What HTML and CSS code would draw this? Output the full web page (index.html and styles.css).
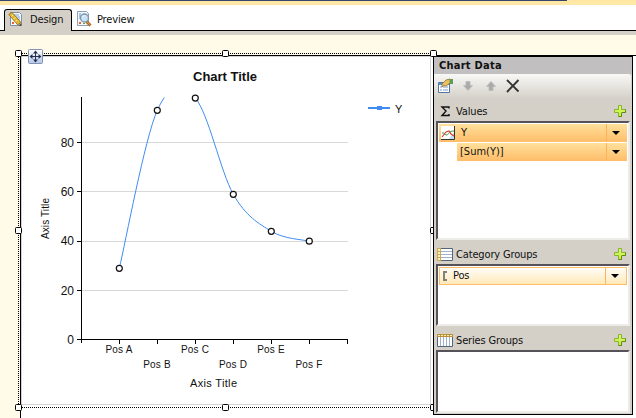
FILE: index.html
```html
<!DOCTYPE html>
<html lang="en">
<head>
  <meta charset="UTF-8">
  <title>Report Designer</title>
  <link rel="stylesheet" href="styles.css">
</head>
<body>
  <svg class="defs" width="0" height="0">
    <linearGradient id="plus-fill" x2="0" y2="1">
      <stop offset="0" stop-color="#e0f77c"/><stop offset="1" stop-color="#c4f02c"/>
    </linearGradient>
    <linearGradient id="move-fill" x2="0" y2="1">
      <stop offset="0" stop-color="#fff"/><stop offset="1" stop-color="#b4c4e6"/>
    </linearGradient>
    <symbol id="plus" viewBox="0 0 12 12">
      <path d="M4.500.5h3v4h4v3h-4v4h-3v-4h-4v-3h4z" fill="url(#plus-fill)" stroke="#86b430"/>
      <path d="M7.500 8v3.500h-3M8 7.500h3.500v-3" fill="none" stroke="#5b8a1c"/>
    </symbol>
  </svg>

  <div class="top-bar"><div class="top-line"></div></div>

  <!-- Design / Preview tabs -->
  <div class="tabs">
    <div class="tab active">
      <svg width="16" height="16" viewBox="0 0 16 16">
        <path d="M2.500 1.500h9l2 2v11h-11z" fill="#f4f8fd" stroke="#7b91ab"/>
        <path d="M6 4h5M8 6h4M9 8h3" stroke="#7fa4d0"/>
        <path d="M4 11h2v2H4z" fill="#e8602c"/><path d="M10 10h2v3h-2z" fill="#58a848"/>
        <path d="M.8 3.500l3-2.300 9 10-3 2.800z" fill="#e8b930" stroke="#8a6414" stroke-width=".8"/>
        <path d="M3.500 5.500L5 4M5.500 8L7 6.500M7.500 10.500L9 9" stroke="#fff09a"/>
        <path d="M10.500 14.500l2.500-2.500.5 3z" fill="#5b4630"/>
      </svg>
      <span>Design</span>
    </div>
    <div class="tab">
      <svg width="16" height="16" viewBox="0 0 16 16">
        <path d="M1.500.5h9l2 2v12h-11z" fill="#f4f8fd" stroke="#8ba0b8"/>
        <path d="M3 3h2M3 5h2M3 7h1" stroke="#6590c4"/>
        <path d="M3 11h2v2H3z" fill="#e8602c"/><path d="M7 12h2v1H7z" fill="#58a848"/>
        <path d="M10.500 10.500l4 4" stroke="#a5642a" stroke-width="3"/>
        <path d="M10 10l4.500 4" stroke="#eda643"/>
        <circle cx="8.500" cy="7" r="4" fill="#c9e2f4" stroke="#7c95b0" stroke-width="1.300"/>
        <path d="M6.500 6.500a2.500 2.500 0 0 1 2-1.800" fill="none" stroke="#fff"/>
      </svg>
      <span>Preview</span>
    </div>
  </div>
  <div class="strip"></div>

  <div class="workspace">
    <div class="page">
      <div class="chart">
        <svg width="412" height="350" viewBox="21 56 412 350">
          <clipPath id="plot"><rect x="82" y="97.500" width="270" height="243"/></clipPath>
          <path class="frame" d="M21.500 404.500v-348h409v348z"/>
          <text class="title" x="193" y="81" textLength="64">Chart Title</text>

          <path class="grid" d="M82 142.500h266M82 191.500h266M82 241.500h266M82 290.500h266"/>
          <path class="axis" d="M81.500 97v246M77 339.500h271M77 142.500h4M77 191.500h4M77 241.500h4M77 290.500h4M119.500 340v4M157.500 340v4M195.500 340v4M233.500 340v4M271.500 340v4M309.500 340v4M347.500 340v4"/>
          <g class="scale">
            <text x="74" y="147">80</text>
            <text x="74" y="196">60</text>
            <text x="74" y="245">40</text>
            <text x="74" y="295">20</text>
            <text x="74" y="344">0</text>
          </g>
          <g class="category">
            <text x="119" y="353">Pos A</text>
            <text x="157" y="368">Pos B</text>
            <text x="195" y="353">Pos C</text>
            <text x="233" y="368">Pos D</text>
            <text x="271" y="353">Pos E</text>
            <text x="309" y="368">Pos F</text>
          </g>
          <text class="axis-title" x="190" y="387" textLength="47">Axis Title</text>
          <text class="axis-title small" transform="translate(49 239) rotate(-90)" textLength="41">Axis Title</text>

          <path class="series" clip-path="url(#plot)" d="M119.300 268.300C125.600 241.900 144.700 138.700 157.300 110.300C169.900 81.900 182.700 84.100 195.300 98.100C208 112.100 220.700 172.100 233.300 194.300C245.900 216.500 258.700 223.500 271.300 231.300C283.900 239.100 303 239.500 309.300 241.200"/>
          <g class="markers">
            <circle cx="119.300" cy="268.300" r="3"/>
            <circle cx="157.300" cy="110.300" r="3"/>
            <circle cx="195.300" cy="98.100" r="3"/>
            <circle cx="233.300" cy="194.300" r="3"/>
            <circle cx="271.300" cy="231.300" r="3"/>
            <circle cx="309.300" cy="241.200" r="3"/>
          </g>

          <path class="legend-line" d="M368 108h22"/>
          <rect x="377" y="106" width="5" height="4" fill="#418cf0"/>
          <text class="legend" x="395" y="113">Y</text>
        </svg>
      </div>

      <div class="panel">
        <div class="panel-title">Chart Data</div>
        <div class="toolbar">
          <svg width="17" height="16" viewBox="0 0 17 16">
            <path d="M1.500 4.500h11v10h-11z" fill="#fff" stroke="#53769e"/>
            <path d="M2 6h10" stroke="#5e8fd0" stroke-width="2"/>
            <path d="M3 9h2M3 12h2M6 9h5M6 12h5" stroke="#7b9cc4"/>
            <path d="M5 6l4-4 4-1v4L9 8l-2-.5L5 9z" fill="#eac160" stroke="#94702c" stroke-width=".8"/>
            <path d="M13 1h3v5h-3z" fill="#55a05a"/>
          </svg>
          <svg width="10" height="10" viewBox="0 0 10 10">
            <path d="M3 .5h4v4h2.500L5 9.500.5 4.500H3z" fill="#aaa" stroke="#bcbcbc"/>
          </svg>
          <svg class="up" width="10" height="10" viewBox="0 0 10 10">
            <path d="M3 9.500h4v-4h2.500L5 .5.5 5.500H3z" fill="#aaa" stroke="#bcbcbc"/>
          </svg>
          <svg class="delete" width="14" height="14" viewBox="0 0 14 14">
            <path d="M1 1l11.500 11.500M12.500 1L1 13" stroke="#333" stroke-width="1.900"/>
          </svg>
        </div>

        <div class="group-head values">
          <svg width="16" height="16" viewBox="0 0 16 16">
            <path d="M12 5.500V4H5l4 4-4 4.500h7V11" fill="none" stroke="#111" stroke-width="1.400"/>
          </svg>
          <span>Values</span>
          <svg class="add" width="12" height="12"><use href="#plus"/></svg>
        </div>
        <div class="list values-list">
          <div class="item">
            <svg class="line-icon" width="14" height="14" viewBox="0 0 14 14">
              <path d="M0 0h14v14H0z" fill="#fff"/><path d="M7 14l7-9v9z" fill="#bfe2f6"/>
              <path d="M1 7c3-1 3 3 5 2s2-4 7-4" fill="none" stroke="#28a050"/>
              <path d="M1 11l4-5 3-1 2 3 3 2" fill="none" stroke="#e04028" stroke-width="1.200"/>
              <path d="M13.500 0v13.500H0" fill="none" stroke="#333"/>
            </svg>
            <span>Y</span>
            <div class="drop"></div>
          </div>
          <div class="item child">
            <span>[Sum(Y)]</span>
            <div class="drop"></div>
          </div>
        </div>

        <div class="group-head">
          <svg width="16" height="13" viewBox="0 0 16 13">
            <path d="M.5.5h15v12H.5z" fill="#fff" stroke="#52657d"/>
            <path d="M4 3.500h11M4 6.500h11M4 9.500h11" stroke="#9eb1cb"/>
            <path d="M0 0h4v13H0z" fill="#cda858"/>
            <path d="M1 2h2M1 5h2M1 8h2M1 11h2" stroke="#fff0ac" stroke-width="2"/>
          </svg>
          <span>Category Groups</span>
          <svg class="add" width="12" height="12"><use href="#plus"/></svg>
        </div>
        <div class="list category-list">
          <div class="item pale">
            <svg class="bracket" width="4" height="10" viewBox="0 0 4 10">
              <path d="M4 1H1v8h3" fill="none" stroke="#858077" stroke-width="2"/>
            </svg>
            <span>Pos</span>
            <div class="drop"></div>
          </div>
        </div>

        <div class="group-head series-head">
          <svg width="16" height="13" viewBox="0 0 16 13">
            <path d="M.5.5h15v12H.5z" fill="#fff" stroke="#52657d"/>
            <path d="M3.500 3v9M6.500 3v9M9.500 3v9M12.500 3v9" stroke="#9eb1cb"/>
            <path d="M0 0h16v3H0z" fill="#b98f3e"/>
            <path d="M1 1.500h2M4 1.500h2M7 1.500h2M10 1.500h2M13 1.500h2" stroke="#fff0ac"/>
          </svg>
          <span>Series Groups</span>
          <svg class="add" width="12" height="12"><use href="#plus"/></svg>
        </div>
        <div class="list series-list"></div>
      </div>
    </div>
  </div>

  <!-- selection outline with resize handles, lies over the chart -->
  <svg class="selection" width="424" height="362" viewBox="14 49 424 362">
    <path class="dots" d="M18.500 53v354M18 53.500h415M18 407.500h415"/>
    <g class="handles">
      <rect x="15.500" y="50.500" width="6" height="6" rx="1"/>
      <rect x="222.500" y="50.500" width="6" height="6" rx="1"/>
      <rect x="430.500" y="50.500" width="6" height="6" rx="1"/>
      <rect x="15.500" y="227.500" width="6" height="6" rx="1"/>
      <rect x="15.500" y="404.500" width="6" height="6" rx="1"/>
      <rect x="222.500" y="404.500" width="6" height="6" rx="1"/>
      <path d="M433 227.500h-2l-.5 1v4l.5 1h2M433 404.500h-2l-.5 1v4l.5 1h2"/>
    </g>
    <rect x="28.500" y="49.500" width="14" height="14" rx="1" fill="url(#move-fill)" stroke="#8292b5"/>
    <path d="M35.500 51.500v10M30.500 56.500h10" stroke="#26304a"/>
    <path d="M35.500 50.500l2.500 3h-5zM35.500 62.500l2.500-3h-5zM29.500 56.500l3-2.500v5zM41.500 56.500l-3-2.500v5z" fill="#26304a"/>
  </svg>
</body>
</html>
```
FILE: styles.css
```css
* {
  box-sizing: border-box;
}
body {
  margin: 0;
  height: 418px;
  overflow: hidden;
  position: relative;
  background: #fffbe8;
  font: 11px "DejaVu Sans Condensed", "DejaVu Sans", sans-serif;
  letter-spacing: -0.15px;
  color: #111;
}
svg {
  display: block;
  flex: none;
}
.defs {
  position: absolute;
}

/* top */
.top-bar {
  height: 5px;
  background: #ffe8a6;
}
.top-line {
  width: 567px;
  height: 1px;
  background: #36456a;
}
.tabs {
  display: flex;
  height: 26px;
  padding: 4px 0 0 4px;
  background: #fff;
  border-bottom: 1px solid #000;
}
.tab {
  display: flex;
  height: 22px;
  padding: 2px 0 0 4px;
  gap: 5px;
}
.tab span {
  line-height: 17px;
}
.tab.active {
  width: 68px;
  padding: 1px 0 0 3px;
  gap: 6px;
  background: #d4d0c8;
  border: 1px solid #000;
  border-bottom: none;
  border-radius: 3px 3px 0 0;
}
.strip {
  height: 4px;
  background: #d4d0c8;
}

/* design surface */
.workspace {
  padding: 20px 0 0 20px;
}
.page {
  display: flex;
  height: 363px;
  background: #fff;
  border-top: 1px solid #000;
  border-left: 1px solid #000;
}
.chart {
  width: 412px;
  letter-spacing: 0;
}
.chart text {
  font-family: "Liberation Sans", Arial, sans-serif;
  font-size: 11px;
  fill: #111;
}
.frame {
  fill: #fff;
  stroke: #d3d3d3;
}
.grid {
  stroke: #d8d8d8;
}
.axis {
  stroke: #000;
}
.chart .title {
  font-size: 13px;
  font-weight: bold;
}
.chart .scale text {
  font-size: 12px;
  text-anchor: end;
}
.chart .category text {
  font-size: 10px;
  letter-spacing: 0.2px;
  text-anchor: middle;
}
.chart .small {
  font-size: 10px;
}
.series {
  fill: none;
  stroke: #418cf0;
}
.markers {
  fill: #fff;
  stroke: #111;
  stroke-width: 1.2;
}
.legend-line {
  stroke: #418cf0;
  stroke-width: 2;
}

/* chart data panel */
.panel {
  width: 200px;
  height: 359px;
  background: #d4d0c8;
  border: 1px solid #000;
}
.panel-title {
  height: 17px;
  padding-left: 5px;
  background: #c1bfc0;
  font-weight: bold;
  letter-spacing: 0.25px;
  line-height: 18px;
}
.toolbar {
  display: flex;
  align-items: center;
  height: 25px;
  margin-right: 1px;
  padding: 0 0 2px 3px;
  gap: 9px;
  background: linear-gradient(#f8f8f6, #d4d0c8);
  border-radius: 0 3px 3px 0;
}
.toolbar .up {
  margin-left: 4px;
}
.toolbar .delete {
  margin-left: 1px;
}
.group-head {
  display: flex;
  align-items: center;
  height: 24px;
  padding: 4px 6px 0 3px;
  gap: 3px;
}
.group-head.values {
  height: 22px;
  padding-top: 2px;
}
.add {
  margin-left: auto;
}
.list {
  margin: 0 2px;
  padding: 1px 1px 0 1px;
  background: #fff;
  border: 2px solid;
  border-color: #55525a #eeece8 #eeece8 #55525a;
}
.values-list {
  height: 119px;
}
.category-list {
  height: 62px;
}
.series-list {
  height: 63px;
}
.item {
  display: flex;
  align-items: center;
  height: 18px;
  margin-bottom: 1px;
  padding-left: 2px;
  background: linear-gradient(#ffe09c, #ffbd69);
}
.item span {
  margin: -2px 0 0 6px;
}
.item.child {
  margin-left: 18px;
  padding-left: 0;
}
.item.child span {
  margin-left: 3px;
  letter-spacing: 0;
}
.item.pale {
  padding-left: 3px;
  background: linear-gradient(#fffdf8, #ffe9b8);
  border: 1px solid #ffbd69;
}
.drop {
  display: flex;
  align-items: center;
  width: 21px;
  height: 100%;
  margin-left: auto;
  padding-left: 5px;
  border-left: 1px solid #ffb45c;
}
.drop::after {
  content: "";
  border: 4px solid transparent;
  border-top-color: #000;
  border-bottom: none;
}

/* selection */
.selection {
  position: absolute;
  left: 14px;
  top: 49px;
}
.dots {
  stroke: #000;
  stroke-dasharray: 1 1;
}
.handles {
  fill: #fff;
  stroke: #000;
}
```
